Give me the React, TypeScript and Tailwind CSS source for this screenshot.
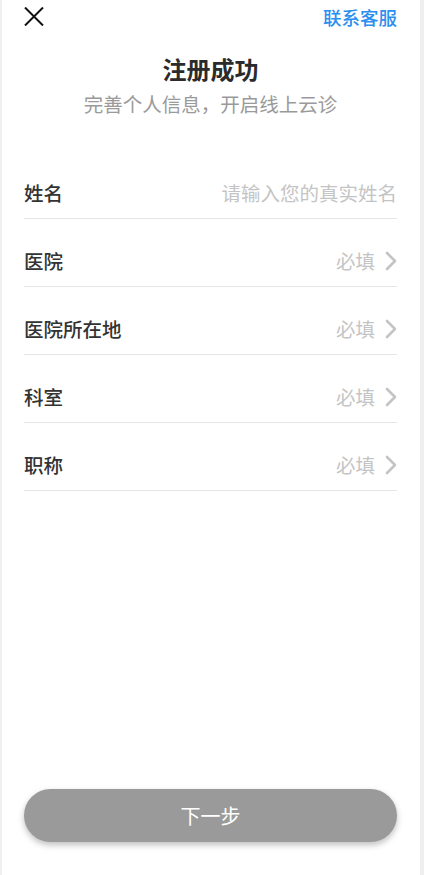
import React from 'react';

const rows = [
  { label: '姓名', placeholder: '请输入您的真实姓名', arrow: false },
  { label: '医院', placeholder: '必填', arrow: true },
  { label: '医院所在地', placeholder: '必填', arrow: true },
  { label: '科室', placeholder: '必填', arrow: true },
  { label: '职称', placeholder: '必填', arrow: true },
];

function Chevron() {
  return (
    <svg width="12" height="20" viewBox="0 0 12 20" fill="none" className="ml-[10px]">
      <path d="M2 2 L10 10 L2 18" stroke="#c4c4c4" strokeWidth="2.6" strokeLinecap="round" strokeLinejoin="round" />
    </svg>
  );
}

export default function App() {
  return (
    <div
      className="flex h-[875px] w-[424px] flex-col border-l-2 border-r-4 border-[#efefef] bg-white pl-[22px] pr-[23px]"
      style={{ fontFamily: '"Noto Sans CJK SC", "Noto Sans", sans-serif' }}
    >
      {/* top bar */}
      <div className="flex h-[33px] items-center justify-between">
        <svg width="20" height="19" viewBox="0 0 20 19" fill="none">
          <path d="M1 0.5 L19 18.5 M19 0.5 L1 18.5" stroke="#111" strokeWidth="2" />
        </svg>
        <span className="text-[18.5px] font-medium leading-[24px] text-[#2b8ef0]">联系客服</span>
      </div>

      <h1 className="mt-[20px] text-center text-[24px] font-bold leading-[32px] text-[#2b2b2b]">注册成功</h1>
      <p className="mt-[5px] text-center text-[19.5px] leading-[28px] text-[#9a9a9a]">完善个人信息，开启线上云诊</p>

      <div className="mt-[33px] flex flex-col">
        {rows.map((r) => (
          <div key={r.label} className="flex h-[68px] items-end border-b border-[#e6e6e6] pb-[12px]">
            <div className="flex h-[26px] w-full items-center justify-between">
              <span className="text-[19.5px] font-medium leading-[26px] text-[#333]">{r.label}</span>
              <div className="flex items-center">
                <span className="text-[19.5px] leading-[26px] text-[#c4c4c4]">{r.placeholder}</span>
                {r.arrow && <Chevron />}
              </div>
            </div>
          </div>
        ))}
      </div>

      <button className="mb-[33px] mt-auto flex h-[53px] w-full items-center justify-center rounded-full bg-[#9a9a9a] text-[20px] text-white shadow-[0_3px_6px_rgba(0,0,0,0.25)]">
        下一步
      </button>
    </div>
  );
}
